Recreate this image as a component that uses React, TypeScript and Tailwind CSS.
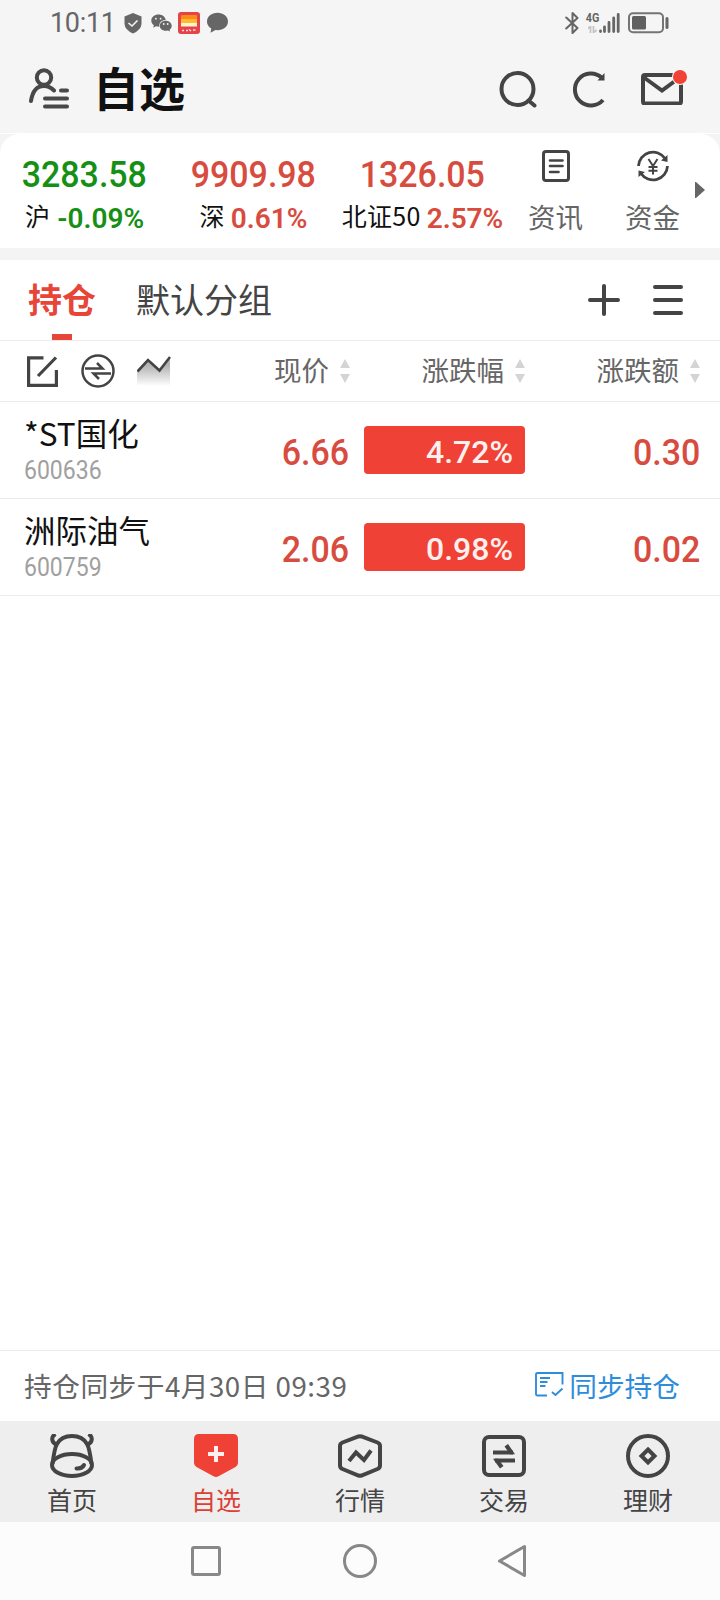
import React from "react";
import type { ReactNode } from "react";

const indices = [
  { name: "沪", value: "3283.58", change: "-0.09%", color: "text-[#159015]", gap: "gap-[7px]" },
  { name: "深", value: "9909.98", change: "0.61%", color: "text-[#d84c40]", gap: "gap-1.5" },
  { name: "北证50", value: "1326.05", change: "2.57%", color: "text-[#d84c40]", gap: "gap-1.5" },
];

const stocks = [
  { name: "*ST国化", code: "600636", price: "6.66", percent: "4.72%", amount: "0.30" },
  { name: "洲际油气", code: "600759", price: "2.06", percent: "0.98%", amount: "0.02" },
];

// Condensed digits used for every quote
const Num = ({ className, children }: { className: string; children: ReactNode }) => (
  <span
    className={`inline-block whitespace-nowrap font-[Roboto,sans-serif] leading-none ${className}`}
  >
    {children}
  </span>
);

const Sorter = () => (
  <svg className="ml-[11px] h-6 w-2.5" viewBox="0 0 10 24" fill="#d4d4d4">
    <path d="M5 0L10 9H0zM5 24L0 15H10z" />
  </svg>
);

const StatusBar = () => (
  <div className="flex h-11 items-center pl-[50px] pr-[51px] pt-px text-[#666]">
    <Num className="h-[26px] w-[74px] origin-left text-[27px] tracking-[-0.3px]">10:11</Num>
    <svg className="h-6 w-[18px]" viewBox="0 0 18 24">
      <path d="M9 2L17.500 5.500V13Q17 19 9 22.500Q1 19 .5 13V5.500z" fill="#666" />
      <path d="M4.500 12L8 15L13.500 9.500" fill="none" stroke="#f5f5f5" strokeWidth="1.600" />
    </svg>
    <svg className="ml-[9px] h-5 w-[21px]" viewBox="0 0 21 20">
      <path
        d="M7.500 1.500C3.500 1.500.3 4.100.3 7.600c0 2 1 3.600 2.500 4.700l-.5 2.500 2.700-1.500c1 .3 2 .4 3.200.4C8 9.500 10.500 7 14.700 7 14.200 3.600 11.200 1.500 7.500 1.500z"
        fill="#666"
      />
      <path
        d="M14.700 7.700c-3.300 0-6 2.200-6 5s2.700 5 6 5c.8 0 1.500-.1 2.200-.3l2.200 1.200-.5-2c1.300-.9 2.100-2.300 2.100-3.900 0-2.800-2.700-5-6-5z"
        fill="#666"
      />
      <g fill="#f5f5f5">
        <circle cx="4.900" cy="5.700" r=".9" />
        <circle cx="9.600" cy="5.700" r=".9" />
        <circle cx="12.700" cy="11" r=".9" />
        <circle cx="16.700" cy="11" r=".9" />
      </g>
    </svg>
    <svg className="ml-1.5 h-[22px] w-[22px]" viewBox="0 0 22 22">
      <rect width="22" height="22" rx="3" fill="#e5434a" />
      <rect x="3" y="3" width="16" height="5" rx="1" fill="#ff8a1c" />
      <path d="M3 7H19V11H3z" fill="#ffbd2e" />
      <path d="M3 11H19V14.500H3z" fill="#fff3d0" />
      <path d="M4 18.500H6M8 18.500H10M11 17.500L13 19M15 18H17.500" stroke="#ffd9dc" strokeWidth="1.500" />
    </svg>
    <svg className="ml-[7px] h-[21px] w-[21px]" viewBox="0 0 21 21" fill="#666">
      <path d="M10.500 .8C4.600.8 0 4.600 0 9.500c0 3 1.600 5.500 4.300 7l-.8 4.200 5-2.600c7 .8 12.500-3 12.500-8.600C21 4.600 16.400.8 10.500.8z" />
    </svg>
    <svg className="ml-auto h-6 w-3.5" viewBox="0 0 14 24" fill="none" stroke="#666" strokeWidth="2" strokeLinecap="round" strokeLinejoin="round">
      <path d="M1.200 6.500L12.500 17L7.500 22V2L12.500 7L1.200 17.500" />
    </svg>
    <div className="ml-[7px] flex h-[22px] w-[34px] items-end">
      <div className="flex h-full w-[13px] shrink-0 flex-col items-center">
        <Num className="scale-x-90 text-[12px] font-bold leading-[12px]">4G</Num>
        <svg className="mt-0.5 h-[7px] w-[9px]" viewBox="0 0 9 7" fill="none" stroke="#c4c4c4" strokeWidth="1.800">
          <path d="M0 2.500L2.500 .5V7M5.500 0V6.500L9 4" />
        </svg>
      </div>
      <svg className="h-[22px] w-[21px] shrink-0" viewBox="0 0 21 22" stroke="#666" strokeWidth="2.800" strokeLinecap="round">
        <path d="M1.500 19V19.500M5.500 15V19.500M10 10.500V19.500M14.700 6V19.500M19.200 2.500V19.500" />
      </svg>
    </div>
    <svg className="ml-2 h-[22px] w-[41px]" viewBox="0 0 41 22" fill="none">
      <rect x="1" y="1.300" width="34" height="19" rx="4" stroke="#747474" strokeWidth="2" />
      <rect x="4" y="4" width="14" height="13.500" rx="1.500" fill="#606060" />
      <path d="M39 6.500V15.500" stroke="#666" strokeWidth="3" strokeLinecap="round" />
    </svg>
  </div>
);

const Header = () => (
  <header className="flex h-[89px] items-center pl-[29px] pr-[37px]">
    <svg className="h-[42px] w-[41px]" viewBox="0 0 41 42" fill="none" stroke="#484848" strokeWidth="4" strokeLinecap="round">
      <circle cx="15" cy="9.500" r="7.200" />
      <path d="M2 33C3.500 23 8.500 18 15 18C19 18 22 19.500 25 22.500M32 22.500H38M16 30.500H38M16 38.500H38" />
    </svg>
    <h1 className="mb-[5px] ml-[23px] text-[46px] font-bold leading-none text-[#111]">自选</h1>
    <svg className="ml-auto h-[38px] w-[38px]" viewBox="0 0 38 38" fill="none" stroke="#444" strokeWidth="4">
      <circle cx="18.500" cy="19" r="16" />
      <path d="M29.500 30.500L35.500 35.500" strokeLinecap="round" />
    </svg>
    <svg className="ml-[35px] h-[38px] w-[34px]" viewBox="0 0 34 38" fill="none" stroke="#444" strokeWidth="4">
      <path d="M29.500 7.500A16 16 0 1 0 31 30" />
      <path d="M32.500 3V10.500H25.500z" fill="#444" stroke="none" />
    </svg>
    <div className="relative ml-[35px] h-8 w-[42px]">
      <svg className="h-full w-full" viewBox="0 0 42 32" fill="none" stroke="#444" strokeWidth="4">
        <rect x="2" y="2" width="38" height="28.500" rx="2" />
        <path d="M3 4.500L21 17.500L38 5" />
      </svg>
      <span className="absolute -right-1 -top-[3px] h-3.5 w-3.5 rounded-full bg-[#f04236] ring-1 ring-[#f5f5f5]" />
    </div>
  </header>
);

const IndexBar = () => (
  <section className="flex h-[114px] rounded-t-[20px] bg-white">
    {indices.map((item) => (
      <div key={item.name} className="flex w-[169px] shrink-0 flex-col items-center pt-[23px]">
        <Num className={`scale-x-[0.93] text-[36.5px] font-medium ${item.color}`}>{item.value}</Num>
        <div className={`mt-2 flex h-7 items-center justify-center ${item.gap}`}>
          <span className="whitespace-nowrap text-[25px] leading-none tracking-[0.3px] text-[#111]">{item.name}</span>
          <Num className={`mt-1.5 text-[28px] font-semibold ${item.color}`}>
            {item.change}
          </Num>
        </div>
      </div>
    ))}
    <div className="flex w-[97px] shrink-0 flex-col items-center pt-4">
      <svg className="h-8 w-7" viewBox="0 0 28 32" fill="none" stroke="#444" strokeWidth="3" strokeLinecap="round">
        <rect x="1.500" y="1.500" width="25" height="29" rx="2.500" />
        <path d="M8 10.500H20.500M8 16H20.500M8 22H16.500" strokeWidth="2.600" />
      </svg>
      <span className="mt-[21px] text-[27.5px] leading-none text-[#666]">资讯</span>
    </div>
    <div className="flex w-[97px] shrink-0 flex-col items-center pt-4">
      <svg className="h-8 w-8" viewBox="0 0 32 32" fill="none" stroke="#444" strokeWidth="2.800">
        <path d="M1.500 16A14.500 14.500 0 0 1 28 8.500M30.500 16A14.500 14.500 0 0 1 4 23.500" />
        <path d="M30.500 5V12L24 10.500zM1.500 27V20.500L8 22z" fill="#444" stroke="none" />
        <path d="M11.500 9L16 16L20.500 9M16 16V24.500M11.500 17H20.500M11.500 20.800H20.500" strokeWidth="2" />
      </svg>
      <span className="mt-[21px] text-[27.5px] leading-none text-[#666]">资金</span>
    </div>
    <svg className="-ml-1.5 mt-12 h-4 w-2.5 shrink-0" viewBox="0 0 10 16" fill="#666">
      <path d="M0 0H1L10 8L1 16H0z" />
    </svg>
  </section>
);

const Tabs = () => (
  <div className="flex h-20 items-center bg-white pl-7 pr-[37px]">
    <div className="flex h-full flex-col items-center">
      <span className="mt-[22px] text-[34px] font-bold leading-none text-[#e64538]">持仓</span>
      <span className="mt-auto h-1.5 w-5 bg-[#e64538]" />
    </div>
    <span className="mb-0.5 ml-10 text-[34px] leading-none text-[#444]">默认分组</span>
    <svg className="ml-auto h-8 w-8" viewBox="0 0 32 32" stroke="#444" strokeWidth="4" strokeLinecap="round">
      <path d="M16 2V30M2 16H30" />
    </svg>
    <svg className="ml-[33px] h-8 w-[30px]" viewBox="0 0 30 32" stroke="#444" strokeWidth="4" strokeLinecap="round">
      <path d="M2 3H28M2 16H28M2 29H28" />
    </svg>
  </div>
);

const ColumnHeader = () => (
  <div className="flex h-[62px] items-center border-y border-[#ebebeb] bg-white pl-[27px] text-[27.5px] leading-none text-[#666]">
    <svg className="h-[31px] w-[31px]" viewBox="0 0 31 31" fill="none" stroke="#444" strokeWidth="3.200">
      <path d="M16.500 1.800H1.600V29.400H29.400V14M11 20L29 1.500" />
    </svg>
    <svg className="ml-[23px] h-[34px] w-[34px]" viewBox="0 0 34 34" fill="none" stroke="#444" strokeWidth="2.500">
      <circle cx="17" cy="17" r="15.500" />
      <path d="M4 14.500H21.500L16 9M30 19.500H12.500L18 25" />
    </svg>
    <svg className="ml-[22px] h-[30px] w-[34px]" viewBox="0 0 34 30" fill="none">
      <defs>
        <linearGradient id="trend" x1="0" y1="0" x2="0" y2="1">
          <stop offset="0.300" stopColor="#b4b4b4" />
          <stop offset="1" stopColor="#fff" />
        </linearGradient>
      </defs>
      <path d="M0 15L11 3.500L22.500 14.500L33 1V30H0z" fill="url(#trend)" />
      <path d="M.5 15.500L11 4L22.500 14.500L33 1" stroke="#444" strokeWidth="2.600" />
    </svg>
    <div className="flex w-[179px] items-center justify-end">
      <span className="mb-0.5">现价</span>
      <Sorter />
    </div>
    <div className="flex w-[175px] items-center justify-end">
      <span className="mb-0.5">涨跌幅</span>
      <Sorter />
    </div>
    <div className="flex w-[175px] items-center justify-end">
      <span className="mb-0.5">涨跌额</span>
      <Sorter />
    </div>
  </div>
);

const StockRow = ({ stock }: { stock: (typeof stocks)[number] }) => (
  <div className="flex h-[97px] items-center border-b border-[#ebebeb] bg-white pl-6 pr-5">
    <div className="flex w-[225px] flex-col">
      <span className="text-[31.5px] leading-none text-[#111]">{stock.name}</span>
      <Num className="mt-[9px] origin-left scale-x-[0.92] text-[25px] text-[#a0a0a0]">{stock.code}</Num>
    </div>
    <Num className="mt-1.5 w-[100px] origin-right scale-x-[0.93] text-right text-[36.5px] font-medium text-[#d84c40]">
      {stock.price}
    </Num>
    <div className="ml-[15px] flex h-12 w-[161px] items-center justify-end rounded bg-[#ef4135] pr-3">
      <Num className="mt-1 text-[32px] font-medium text-[#fff0ee]">{stock.percent}</Num>
    </div>
    <Num className="ml-auto mt-1.5 origin-right scale-x-[0.93] text-[36.5px] font-medium text-[#d84c40]">
      {stock.amount}
    </Num>
  </div>
);

const SyncBar = () => (
  <div className="flex h-[71px] items-center border-t border-[#ebebeb] bg-white pl-6 pr-10 text-[27.5px] leading-none">
    <span className="mb-px text-[27.7px] tracking-[0.5px] text-[#666]">持仓同步于4月30日 09:39</span>
    <div className="ml-auto flex items-center gap-[5px] text-[#2e8ddb]">
      <svg className="mb-0.5 h-[25px] w-[29px]" viewBox="0 0 29 25" fill="none" stroke="currentColor" strokeWidth="1.900">
        <path d="M12 23.500H2.500Q1 23.500 1 22V2.500Q1 1 2.500 1H27.500V12.500M5 6H15M5 10H12.500M5 14H10.500M17 20L20.500 23L27.500 16.500" />
      </svg>
      <span className="mb-px text-[27.7px]">同步持仓</span>
    </div>
  </div>
);

const NavItem = ({ label, active, children }: { label: string; active?: boolean; children: ReactNode }) => (
  <div className="flex w-36 flex-col items-center pt-[13px]">
    <svg className="h-11 w-11" viewBox="0 0 44 44" fill="none" stroke="#444" strokeWidth="4">
      {children}
    </svg>
    <span className={`mt-[9px] text-[25px] leading-none ${active ? "text-[#dc3f36]" : "text-[#444]"}`}>
      {label}
    </span>
  </div>
);

const BottomNav = () => (
  <nav className="flex h-[101px] bg-[#eee]">
    <NavItem label="首页">
      <path d="M2.500 30C3.500 22 4.500 14 7 10C10 4.500 16 2 22 2S34 4.500 37 10C39.500 14 40.500 22 41.500 30" />
      <ellipse cx="22" cy="31" rx="20" ry="11" />
      <path d="M5.500 0C1 2.500 1 7.500 6 10.500M38.500 0C43 2.500 43 7.500 38 10.500" />
      <path d="M26.500 34.500Q32 35 34 31" strokeLinecap="round" />
    </NavItem>
    <NavItem label="自选" active>
      <path
        d="M5 0H39Q44 0 44 5V29Q44 31.500 41.500 33L24.500 42.300Q22 43.700 19.500 42.300L2.500 33Q0 31.500 0 29V5Q0 0 5 0z"
        fill="#ef4135"
        stroke="none"
      />
      <path d="M22 12V28M14 20H30" stroke="#fff0ee" />
    </NavItem>
    <NavItem label="行情">
      <path d="M20.500 2.500Q22 2 23.500 2.500L39.500 8.500Q42 9.500 42 12V31.500Q42 34 39.500 35L23.500 41.500Q22 42 20.500 41.500L4.500 35Q2 34 2 31.500V12Q2 9.500 4.500 8.500z" />
      <path d="M11 27L18 18.500L26 26L33 16.500" />
    </NavItem>
    <NavItem label="交易">
      <rect x="2" y="3" width="40" height="38" rx="5" />
      <path d="M11 18.500H31M33 26.500H13" />
      <path d="M26 10L33 20.300H28L22.500 12.500zM18 34.500L11 24.700H16L21.500 32z" fill="#444" stroke="none" />
    </NavItem>
    <NavItem label="理财">
      <circle cx="22" cy="22" r="20" />
      <path d="M22 15.500L28.500 22L22 28.500L15.500 22z" />
    </NavItem>
  </nav>
);

const SystemNav = () => (
  <div className="flex h-[78px] items-center bg-[#fcfcfc] pl-[191px]">
    <div className="h-[30px] w-[30px] rounded-[3px] border-3 border-[#888]" />
    <div className="ml-[122px] h-[34px] w-[34px] rounded-full border-3 border-[#888]" />
    <svg className="ml-[120px] h-[34px] w-[30px]" viewBox="0 0 30 34" fill="none" stroke="#888" strokeWidth="3" strokeLinejoin="round">
      <path d="M27.500 2.500V31.500L2.500 17z" />
    </svg>
  </div>
);

const App: React.FC = () => {
  return (
    <div className="flex h-[1600px] w-[720px] flex-col overflow-hidden bg-white font-['Noto_Sans_CJK_SC',sans-serif]">
      <div className="bg-[#f5f5f5]">
        <StatusBar />
        <Header />
      </div>
      <div className="border-b-12 border-t border-b-[#f4f4f4] border-t-white bg-[#f4f4f4]">
        <IndexBar />
      </div>
      <Tabs />
      <ColumnHeader />
      <main className="flex-1">
        {stocks.map((stock) => (
          <StockRow key={stock.code} stock={stock} />
        ))}
      </main>
      <SyncBar />
      <BottomNav />
      <SystemNav />
    </div>
  );
};

export default App;
